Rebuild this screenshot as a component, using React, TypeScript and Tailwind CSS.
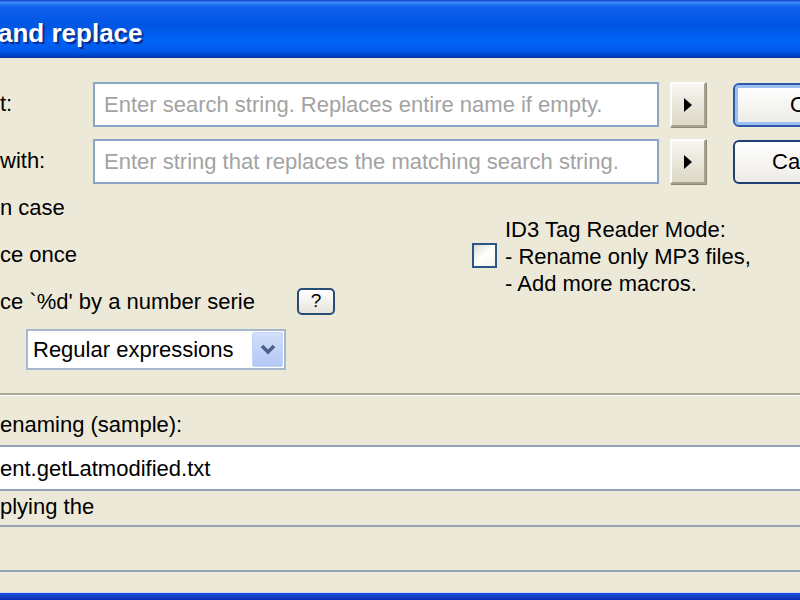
import React from 'react';

const font = { fontFamily: "'Liberation Sans', Arial, sans-serif" };

function ArrowButton() {
  return (
    <div className="w-[36px] h-[45px] shrink-0 flex items-center justify-center bg-gradient-to-b from-[#f7f6f0] to-[#dcd8c6] border-2 border-t-[#fdfdfb] border-l-[#fdfdfb] border-r-[#a5a28f] border-b-[#a5a28f] shadow-[1px_1px_0_#8d8a78]">
      <svg width="10" height="14" viewBox="0 0 10 14">
        <path d="M1 0 L9 7 L1 14 Z" fill="#000" />
      </svg>
    </div>
  );
}

export default function App() {
  return (
    <div className="w-[800px] h-[600px] overflow-hidden bg-[#ece9d8] flex flex-col text-[22px] text-black" style={font}>
      {/* Title bar */}
      <div className="h-[58px] shrink-0 flex items-center bg-[linear-gradient(to_bottom,#0a3fc2_0%,#3d8af6_4%,#0f5fec_12%,#0056e4_45%,#0063f8_70%,#0159ea_88%,#0040bd_97%,#0a2f9a_100%)]">
        <span className="-ml-[2px] mt-[8px] text-white font-bold text-[26px] whitespace-nowrap [text-shadow:2px_2px_1px_#0b2a8a]">and replace</span>
      </div>

      {/* Search / replace rows */}
      <div className="mt-[24px] flex items-center h-[45px] shrink-0">
        <div className="w-[93px] shrink-0 -mt-[2px]">t:</div>
        <div className="w-[566px] h-[45px] shrink-0 bg-white border-2 border-[#8ba5c4] flex items-center px-[9px] text-[#a3a3a3] whitespace-nowrap overflow-hidden">
          Enter search string. Replaces entire name if empty.
        </div>
        <div className="ml-[11px] shrink-0"><ArrowButton /></div>
        <div className="ml-[27px] w-[90px] h-[44px] shrink-0 rounded-[6px] border-2 border-[#2f5aa8] bg-gradient-to-b from-white to-[#ecebe6] shadow-[inset_0_0_0_3px_#9cc0f4] flex items-center pl-[55px]">O</div>
      </div>
      <div className="mt-[12px] flex items-center h-[45px] shrink-0">
        <div className="w-[93px] shrink-0 -mt-[2px]">with:</div>
        <div className="w-[566px] h-[45px] shrink-0 bg-white border-2 border-[#8ba5c4] flex items-center px-[9px] text-[#a3a3a3] whitespace-nowrap overflow-hidden">
          Enter string that replaces the matching search string.
        </div>
        <div className="ml-[11px] shrink-0"><ArrowButton /></div>
        <div className="ml-[27px] w-[90px] h-[44px] shrink-0 rounded-[6px] border-2 border-[#1f3f75] bg-gradient-to-b from-white to-[#ecebe6] flex items-center pl-[37px]">Ca</div>
      </div>

      {/* Options */}
      <div className="flex h-[209px] shrink-0">
        <div className="w-[472px] shrink-0 pt-[12px] flex flex-col">
          <div className="h-[24px] leading-[24px]">n case</div>
          <div className="h-[24px] leading-[24px] mt-[23px]">ce once</div>
          <div className="h-[27px] mt-[21px] flex items-center">
            <span className="w-[297px] shrink-0 whitespace-nowrap">ce `%d' by a number serie</span>
            <div className="w-[38px] h-[27px] rounded-[5px] border-2 border-[#284d74] bg-gradient-to-b from-white to-[#e6e4da] flex items-center justify-center text-[19px]">?</div>
          </div>
          <div className="ml-[26px] mt-[14px] w-[260px] h-[41px] bg-white border-2 border-[#a6b8d0] flex items-center">
            <span className="flex-1 pl-[5px] whitespace-nowrap">Regular expressions</span>
            <div className="w-[31px] h-[35px] mr-[1px] rounded-[2px] bg-gradient-to-b from-[#d2defb] to-[#b3c8f5] border border-[#c4d3f8] flex items-center justify-center">
              <svg width="16" height="11" viewBox="0 0 16 11">
                <path d="M2 2 L8 8 L14 2" stroke="#4a5f8c" strokeWidth="3.5" fill="none" />
              </svg>
            </div>
          </div>
        </div>
        <div className="flex pt-[32px] self-start">
          <div className="w-[25px] h-[25px] border-2 border-[#2a5786] bg-gradient-to-br from-[#dcdbd3] via-white to-[#f3f3ef] mt-[27px] shrink-0" />
          <div className="ml-[8px] leading-[27px] whitespace-nowrap">
            <div>ID3 Tag Reader Mode:</div>
            <div>- Rename only MP3 files,</div>
            <div>- Add more macros.</div>
          </div>
        </div>
      </div>

      {/* Separator */}
      <div className="h-[2px] bg-[#aca899] shrink-0" />
      <div className="h-[1px] bg-white shrink-0" />

      {/* Sample */}
      <div className="mt-[17px] h-[24px] leading-[24px] shrink-0">enaming (sample):</div>
      <div className="mt-[8px] h-[46px] shrink-0 bg-white border-t-2 border-b-2 border-[#93a3b3] flex items-center">ent.getLatmodified.txt</div>
      <div className="mt-[4px] h-[24px] leading-[24px] shrink-0">plying the</div>
      <div className="mt-[6px] h-[2px] bg-[#93a3b3] shrink-0" />
      <div className="h-[43px] shrink-0" />
      <div className="h-[2px] bg-[#93a3b3] shrink-0" />
      <div className="flex-1" />
      <div className="h-[1px] bg-[#c9d6f6] shrink-0" />
      <div className="h-[7px] bg-[linear-gradient(to_bottom,#1f4fdc,#0a2fb0)] shrink-0" />
    </div>
  );
}
